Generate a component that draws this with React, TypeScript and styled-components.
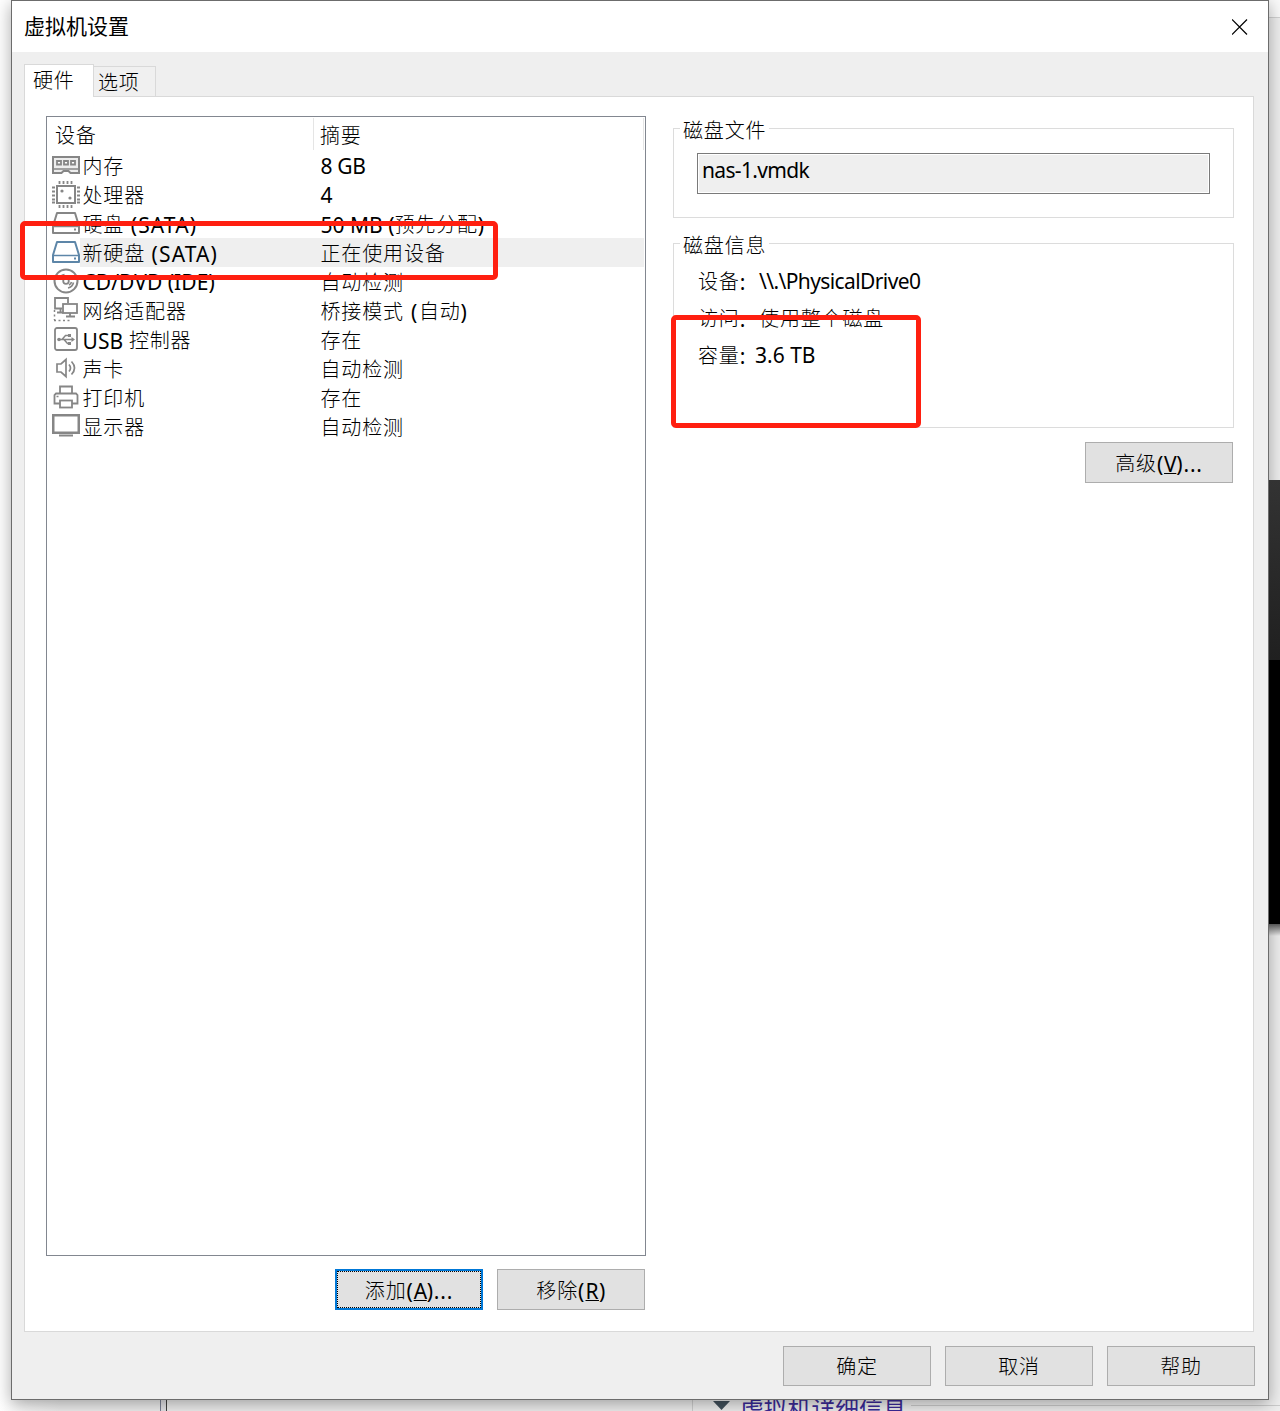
import React from "react";
import styled, { createGlobalStyle } from "styled-components";

const GlobalStyle = createGlobalStyle`
  * { box-sizing: border-box; }
  body {
    margin: 0;
    background: #efefef;
    color: #000;
    font-family: "Noto Sans", "Noto Sans CJK SC", sans-serif;
    font-size: 20px;
  }
`;

const Desktop = styled.div`
  position: relative;
  width: 1280px;
  height: 1411px;
  overflow: hidden;
  background: #efefef;
`;

/* What shows of the main window behind the dialog */
const Behind = styled.div<{ $x: number; $y: number; $w: number; $h: number; $fill: string }>`
  position: absolute;
  left: ${(p) => p.$x}px;
  top: ${(p) => p.$y}px;
  width: ${(p) => p.$w}px;
  height: ${(p) => p.$h}px;
  background: ${(p) => p.$fill};
`;

const DetailsHeading = styled.div`
  position: absolute;
  left: 713px;
  top: 1394px;
  display: flex;
  align-items: flex-start;
  gap: 10px;
  color: #3b2a98;
  font-family: "Noto Sans CJK SC", sans-serif;
  font-size: 23.8px;
  line-height: 28px;
  white-space: nowrap;
  svg { margin-top: 7px; }
`;

const Dialog = styled.div`
  position: relative;
  display: flex;
  flex-direction: column;
  width: 1258px;
  height: 1400px;
  margin-left: 11px;
  border: 1px solid #6c6c6c;
  background: #efefef;
  box-shadow: 0 4px 16px rgba(0, 0, 0, 0.34);
`;

const TitleBar = styled.header`
  display: flex;
  align-items: center;
  justify-content: space-between;
  flex: 0 0 51px;
  padding: 0 20px 0 12px;
  background: #fff;
`;

const Title = styled.h1`
  margin: 0 0 4px;
  font-family: "Noto Sans CJK SC", sans-serif;
  font-size: 21px;
  font-weight: 400;
  line-height: 30px;
`;

const Tabs = styled.div`
  display: flex;
  align-items: flex-end;
  height: 44px;
  padding-left: 12px;
`;

const Tab = styled.div<{ $active?: boolean }>`
  position: relative;
  z-index: ${(p) => (p.$active ? 1 : 0)};
  width: ${(p) => (p.$active ? 70 : 62)}px;
  height: ${(p) => (p.$active ? 33 : 30)}px;
  margin-bottom: ${(p) => (p.$active ? -1 : 0)}px;
  padding-left: ${(p) => (p.$active ? 8 : 4)}px;
  border: 1px solid #d9d9d9;
  border-left-width: ${(p) => (p.$active ? 1 : 0)}px;
  border-bottom: 0;
  background: ${(p) => (p.$active ? "#fff" : "#f0f0f0")};
  line-height: 30px;
`;

const Panel = styled.main`
  display: flex;
  gap: 27px;
  width: 1230px;
  height: 1236px;
  margin-left: 12px;
  padding: 19px 19px 0 21px;
  border: 1px solid #d9d9d9;
  background: #fff;
`;

const LeftColumn = styled.section`
  display: flex;
  flex-direction: column;
  width: 600px;
`;

const RightColumn = styled.section`
  display: flex;
  flex-direction: column;
  flex: 1;
`;

const DeviceList = styled.div`
  height: 1140px;
  padding-right: 1px;
  border: 1px solid #828790;
`;

const HeaderRow = styled.div`
  display: grid;
  grid-template-columns: 267px 1fr;
  grid-template-rows: 32px;
  height: 34px;
  padding: 1px 0;
  line-height: 34px;
`;

const HeaderCell = styled.div<{ $pad: number }>`
  padding-left: ${(p) => p.$pad}px;
  border-right: 1px solid #e5e5e5;
`;

const DeviceRow = styled.div<{ $selected?: boolean }>`
  display: grid;
  grid-template-columns: 33px 239px 1fr;
  height: 29px;
  line-height: 29px;
  background: ${(p) => (p.$selected ? "linear-gradient(90deg, #fff 33px, #efefef 33px)" : "none")};
`;

const IconCell = styled.span`
  display: block;
  padding-left: 5px;
  svg { display: block; }
`;

const Cell = styled.span<{ $pad?: number }>`
  padding-left: ${(p) => p.$pad ?? 2}px;
  white-space: nowrap;
`;

const HanRun = styled.span`
  font-family: "Noto Sans CJK SC", sans-serif;
  font-weight: 300;
  font-size: 20px;
  letter-spacing: 0.85px;
`;

const LatinRun = styled.span<{ $tracking?: number }>`
  font-size: 21px;
  letter-spacing: ${(p) => p.$tracking ?? -0.3}px;
  vertical-align: -0.6px;
`;

const Buttons = styled.div<{ $top: number; $right?: number }>`
  display: flex;
  justify-content: flex-end;
  gap: 14px;
  margin-top: ${(p) => p.$top}px;
  padding-right: ${(p) => p.$right ?? 0}px;
`;

const PushButton = styled.button<{ $focused?: boolean; $low?: boolean }>`
  width: 148px;
  height: ${(p) => (p.$low ? 40 : 41)}px;
  padding: ${(p) => (p.$low ? 0 : 2)}px 0 0;
  border: ${(p) => (p.$focused ? "2px solid #0078d7" : "1px solid #adadad")};
  outline: ${(p) => (p.$focused ? "1px dotted #000" : "none")};
  outline-offset: -3px;
  background: #e1e1e1;
  color: #000;
  font: inherit;
  line-height: 30px;
`;

const Accelerator = styled.span`
  text-decoration: underline;
  text-decoration-thickness: 1px;
  text-underline-offset: 2px;
`;

const Group = styled.fieldset<{ $height: number; $top: number }>`
  height: ${(p) => p.$height}px;
  margin: ${(p) => p.$top}px 0 0;
  padding: 0 23px 0 6px;
  border: 1px solid #dcdcdc;
`;

const Legend = styled.legend`
  height: 24px;
  padding: 0 3px;
  line-height: 27px;
`;

const FileField = styled.div`
  height: 41px;
  margin: 13px 0 0 17px;
  padding-left: 4px;
  border: 1px solid #7a7a7a;
  box-shadow: inset 0 0 0 1px #fff;
  background: #efefef;
  line-height: 31px;
`;

const InfoRows = styled.div`
  padding-top: 7px;
`;

const InfoRow = styled.div<{ $gap: number }>`
  display: flex;
  gap: ${(p) => p.$gap}px;
  height: 37px;
  padding-left: 18px;
  line-height: 37px;
  white-space: pre;
`;

const Marker = styled.div<{ $x: number; $y: number; $w: number; $h: number }>`
  position: absolute;
  left: ${(p) => p.$x}px;
  top: ${(p) => p.$y}px;
  width: ${(p) => p.$w}px;
  height: ${(p) => p.$h}px;
  border: 5px solid #ff1f10;
  border-radius: 5px;
`;

/* Han and Latin runs of one label have their own size and tracking */
function Mixed({ children, tracking }: { children: string; tracking?: number }) {
  const runs = children.match(/[\u4e00-\u9fff]+|[^\u4e00-\u9fff]+/g) ?? [];
  return (
    <>
      {runs.map((run, i) =>
        /[\u4e00-\u9fff]/.test(run) ? <HanRun key={i}>{run}</HanRun> : <LatinRun key={i} $tracking={tracking}>{run}</LatinRun>
      )}
    </>
  );
}

const GRAY = "#868686";

function Icon({ children, color = GRAY }: { children: React.ReactNode; color?: string }) {
  return (
    <svg width="28" height="29" viewBox="0 0 28 29" fill="none" stroke={color} strokeWidth="2">
      {children}
    </svg>
  );
}

const MemoryIcon = () => (
  <Icon>
    <path d="M1 6H27V22H18.500L16.500 20H11.500L9.500 22H1Z" fill="#ededed" />
    <path d="M5 10h4v3.500H5zM12 10h4v3.500h-4zM19 10h4v3.500h-4z" fill="#fff" strokeWidth="1.800" />
    <path d="M2 18H26" strokeWidth="1.500" />
  </Icon>
);

const CpuIcon = () => (
  <Icon>
    <rect x="5" y="6" width="18" height="17" fill="#fff" />
    <path d="M7.500 1v3M11.500 1v3M15.500 1v3M19.500 1v3M7.500 25v3M11.500 25v3M15.500 25v3M19.500 25v3M0 7.500h3M0 11.500h3M0 15.500h3M0 19.500h3M0 22.500h3M25 7.500h3M25 11.500h3M25 15.500h3M25 19.500h3M25 22.500h3" strokeWidth="1.800" />
    <circle cx="10" cy="11" r="1.600" fill={GRAY} stroke="none" />
    <circle cx="18" cy="18" r="1.600" fill={GRAY} stroke="none" />
  </Icon>
);

const DiskIcon = ({ color = GRAY }: { color?: string }) => (
  <Icon color={color}>
    <path d="M5 4H23L27 17V24H1V17Z" fill="#fff" strokeLinejoin="round" />
    <path d="M1 17.500H27" strokeWidth="1.500" />
    <path d="M22 20.500h2" strokeWidth="2" />
  </Icon>
);

const DiscIcon = () => (
  <Icon>
    <circle cx="14" cy="14" r="11.500" />
    <circle cx="14" cy="14" r="2.800" strokeWidth="1.800" />
    <path d="M7 13q.5-4.500 5.500-5.500M16 21q4.500-1 5.500-5.500M17 18q2-1 2.500-3" strokeWidth="1.600" />
  </Icon>
);

const NetworkIcon = () => (
  <Icon>
    <path d="M10 12.500H3V2H16V7M8.500 13v4M5 16.500h6" strokeWidth="1.800" />
    <rect x="11" y="8" width="14" height="9" fill="#fff" strokeWidth="1.800" />
    <path d="M18 17v3M14 20.500h9" strokeWidth="1.800" />
    <path d="M2.500 14v10M2 24.500H18" strokeDasharray="2 2.500" strokeWidth="1.500" />
  </Icon>
);

const UsbIcon = () => (
  <Icon>
    <rect x="3" y="3" width="22" height="22" rx="2" strokeWidth="1.800" />
    <path d="M7 14.500H21M10 14.500l3.500-4H17M12 14.500l3.500 4H18" strokeWidth="1.500" />
    <circle cx="7" cy="14.500" r="1.800" fill={GRAY} stroke="none" />
    <path d="M19.500 12l3.500 2.500-3.500 2.500zM16 9h3v3h-3zM16 17h3v3h-3z" fill={GRAY} stroke="none" />
  </Icon>
);

const SoundIcon = () => (
  <Icon>
    <path d="M5 10H9L14 5.500V22.500L9 18H5Z" strokeWidth="1.700" />
    <path d="M17 10.500q3 3.500 0 7M19.500 7.500q6 6.500 0 13" strokeWidth="1.700" />
  </Icon>
);

const PrinterIcon = () => (
  <Icon>
    <path d="M8 10V3.500H20V10M8 20.500H2.500V12L4 10.500H24L25.500 12V20.500H20" strokeWidth="1.800" />
    <rect x="8" y="17.500" width="12" height="7" fill="#fff" strokeWidth="1.800" />
    <path d="M4.500 13.500h2" strokeWidth="1.500" />
  </Icon>
);

const DisplayIcon = () => (
  <Icon>
    <rect x="1.250" y="3.250" width="25.500" height="17.500" strokeWidth="2.500" />
    <path d="M7 23.500H21" strokeWidth="2" />
  </Icon>
);

interface Device {
  icon: React.ReactNode;
  name: string;
  summary: string;
  tracking?: number;
  summaryTracking?: number;
  selected?: boolean;
}

const devices: Device[] = [
  { icon: <MemoryIcon />, name: "内存", summary: "8 GB" },
  { icon: <CpuIcon />, name: "处理器", summary: "4" },
  { icon: <DiskIcon />, name: "硬盘 (SATA)", tracking: 1.1, summary: "50 MB (预先分配)", summaryTracking: 0 },
  { icon: <DiskIcon color="#5d86a8" />, name: "新硬盘 (SATA)", tracking: 1.1, summary: "正在使用设备", selected: true },
  { icon: <DiscIcon />, name: "CD/DVD (IDE)", tracking: 0.05, summary: "自动检测" },
  { icon: <NetworkIcon />, name: "网络适配器", summary: "桥接模式 (自动)", summaryTracking: 1.6 },
  { icon: <UsbIcon />, name: "USB 控制器", tracking: 0.1, summary: "存在" },
  { icon: <SoundIcon />, name: "声卡", summary: "自动检测" },
  { icon: <PrinterIcon />, name: "打印机", summary: "存在" },
  { icon: <DisplayIcon />, name: "显示器", summary: "自动检测" },
];

export default function App() {
  return (
    <>
      <GlobalStyle />
      <Desktop>
        <Behind $x={0} $y={0} $w={12} $h={1400} $fill="#fff" />
        <Behind $x={0} $y={1400} $w={60} $h={11} $fill="linear-gradient(90deg, #fff, #efefef)" />
        <Behind $x={1269} $y={0} $w={11} $h={17} $fill="#fafafa" />
        <Behind $x={1269} $y={17} $w={11} $h={1} $fill="#d2d2d2" />
        <Behind $x={160} $y={1400} $w={7} $h={11} $fill="linear-gradient(90deg, #7a8094 1px, #e4e4e8 1px, #e4e4e8 6px, #404040 6px)" />
        <Behind $x={692} $y={1400} $w={1} $h={11} $fill="#d0d0d0" />
        <Behind $x={911} $y={1405} $w={369} $h={1} $fill="#ccc" />
        <DetailsHeading>
          <svg width="17" height="9" viewBox="0 0 17 9"><path d="M0 0H17L8.500 9Z" fill="#42515c" /></svg>
          虚拟机详细信息
        </DetailsHeading>
        <Dialog>
          <TitleBar>
            <Title>虚拟机设置</Title>
            <svg width="16" height="16" viewBox="0 0 16 16"><path d="M0 .5L15 15.500M15 .5L0 15.500" stroke="#000" strokeWidth="1.200" /></svg>
          </TitleBar>
          <Tabs>
            <Tab $active><Mixed>硬件</Mixed></Tab>
            <Tab><Mixed>选项</Mixed></Tab>
          </Tabs>
          <Panel>
            <LeftColumn>
              <DeviceList>
                <HeaderRow>
                  <HeaderCell $pad={8}><Mixed>设备</Mixed></HeaderCell>
                  <HeaderCell $pad={6}><Mixed>摘要</Mixed></HeaderCell>
                </HeaderRow>
                {devices.map((d) => (
                  <DeviceRow key={d.name} $selected={d.selected}>
                    <IconCell>{d.icon}</IconCell>
                    <Cell $pad={2.5}><Mixed tracking={d.tracking}>{d.name}</Mixed></Cell>
                    <Cell $pad={1.5}><Mixed tracking={d.summaryTracking}>{d.summary}</Mixed></Cell>
                  </DeviceRow>
                ))}
              </DeviceList>
              <Buttons $top={13} $right={1}>
                <PushButton $focused>
                  <Mixed tracking={0.8}>添加(</Mixed><Accelerator><Mixed>A</Mixed></Accelerator><Mixed tracking={0.8}>)...</Mixed>
                </PushButton>
                <PushButton>
                  <Mixed tracking={1.2}>移除(</Mixed><Accelerator><Mixed tracking={0.4}>R</Mixed></Accelerator><Mixed tracking={0.4}>)</Mixed>
                </PushButton>
              </Buttons>
            </LeftColumn>
            <RightColumn>
              <Group $height={102} $top={0}>
                <Legend><Mixed>磁盘文件</Mixed></Legend>
                <FileField><Mixed tracking={-0.65}>nas-1.vmdk</Mixed></FileField>
              </Group>
              <Group $height={197} $top={13}>
                <Legend><Mixed>磁盘信息</Mixed></Legend>
                <InfoRows>
                  <InfoRow $gap={14}><span><Mixed>设备:</Mixed></span><span><Mixed tracking={-0.6}>{"\\\\.\\PhysicalDrive0"}</Mixed></span></InfoRow>
                  <InfoRow $gap={14}><span><Mixed>访问:</Mixed></span><span><Mixed>使用整个磁盘</Mixed></span></InfoRow>
                  <InfoRow $gap={10}><span><Mixed>容量:</Mixed></span><span><Mixed tracking={0}>3.6 TB</Mixed></span></InfoRow>
                </InfoRows>
              </Group>
              <Buttons $top={14} $right={1}>
                <PushButton>
                  <Mixed tracking={0.8}>高级(</Mixed><Accelerator><Mixed>V</Mixed></Accelerator><Mixed tracking={0.8}>)...</Mixed>
                </PushButton>
              </Buttons>
            </RightColumn>
          </Panel>
          <Buttons $top={14} $right={13}>
            <PushButton $low><Mixed>确定</Mixed></PushButton>
            <PushButton $low><Mixed>取消</Mixed></PushButton>
            <PushButton $low><Mixed>帮助</Mixed></PushButton>
          </Buttons>
        </Dialog>
        <Behind $x={1269} $y={480} $w={11} $h={180} $fill="linear-gradient(#333, #202020)" />
        <Behind $x={1269} $y={660} $w={11} $h={264} $fill="#000" />
        <Behind $x={1269} $y={924} $w={11} $h={12} $fill="linear-gradient(#555, rgba(160,160,160,0))" />
        <Marker $x={20} $y={221} $w={478} $h={59} />
        <Marker $x={671} $y={315} $w={250} $h={113} />
      </Desktop>
    </>
  );
}
